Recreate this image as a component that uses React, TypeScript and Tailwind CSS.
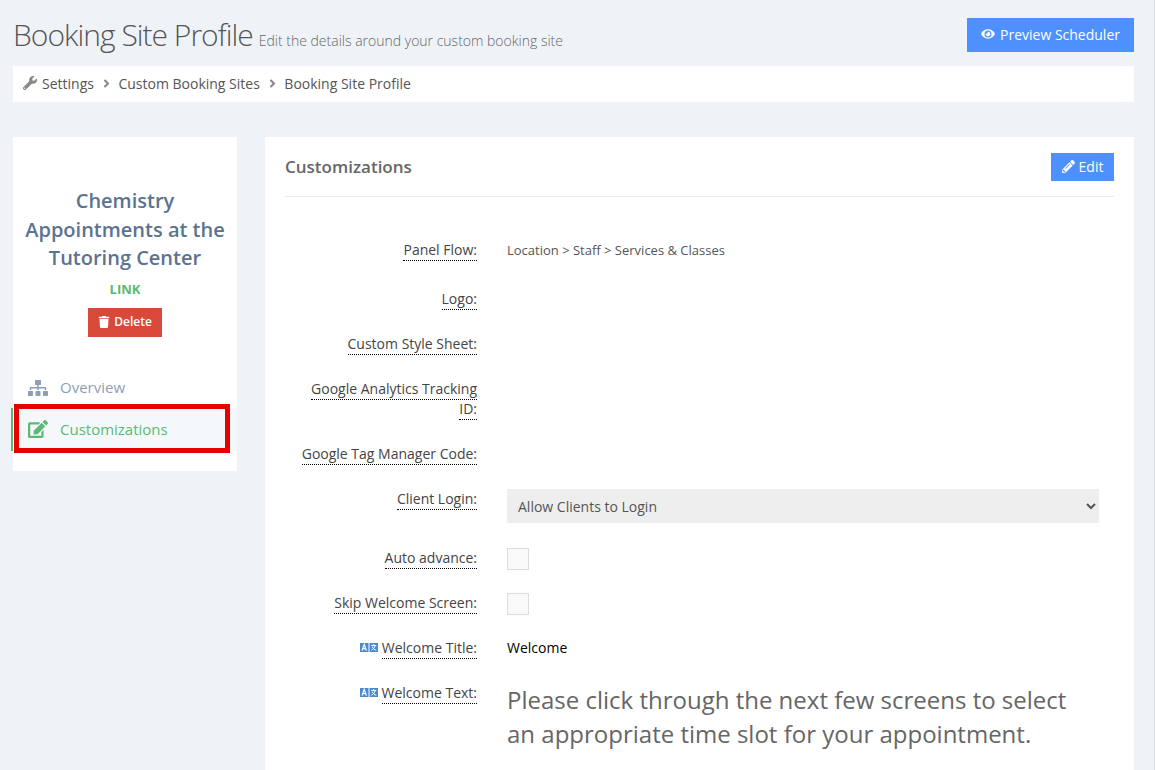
import { ReactNode } from "react";
import { FaAngleRight, FaEdit, FaEye, FaPencilAlt, FaSitemap, FaTrash, FaWrench } from "react-icons/fa";

// small "translate" badge in front of the welcome labels
const TranslateIcon = () => (
  <svg width="18" height="9" viewBox="0 0 18 9" className="mr-1 inline-block align-[1px]">
    <rect x="0" y="0" width="8.5" height="9" fill="#4a8bd0" />
    <rect x="9.5" y="0" width="8.5" height="9" fill="#4a8bd0" />
    <path d="M2 7.6 4.2 1.4 6.4 7.6M3 5.6H5.5" stroke="#fff" strokeWidth="1.2" fill="none" />
    <path d="M11.2 2.5H16.3M13.7 1.2V2.5M15.2 2.5C14.6 5 13 6.5 11.3 7.2M12.2 3.8C13 5.5 14.5 6.8 16.3 7.3" stroke="#fff" strokeWidth="1" fill="none" />
  </svg>
);

interface IRow {
  label: ReactNode;
  heightClass: string;
  children?: ReactNode;
}

const Row = ({ label, heightClass, children }: IRow) => (
  <div className={`flex ${heightClass}`}>
    <div className="w-[192px] shrink-0 pl-[15px] text-right text-[14px] leading-[20px] text-[#444]">{label}</div>
    <div className="ml-[30px] flex-1">{children}</div>
  </div>
);

const Dotted = ({ children }: { children: ReactNode }) => (
  <span className="border-b border-dotted border-black pb-px">{children}</span>
);

const Crumb = () => <FaAngleRight className="mx-[5.75px] text-[13px] text-[#888]" />;

const CheckBox = () => <div className="h-[22px] w-[22px] border border-[#ddd] bg-[#f9f9f9]" />;

const App = () => {
  return (
    <div
      className="h-[770px] w-[1155px] overflow-hidden border-r border-[#d8dbe0] bg-[#eff3f8] pl-[13px] pr-[20px] text-[#444]"
      style={{ fontFamily: '"Open Sans", sans-serif' }}
    >
      <div className="flex h-[66px] items-start justify-between">
        <div className="mt-[14px] flex items-baseline">
          <h1 className="text-[30px] leading-[41px] font-light tracking-[-1px] text-[#555]">Booking Site Profile</h1>
          <span className="ml-[6px] text-[14px] font-light text-[#666]">Edit the details around your custom booking site</span>
        </div>
        <button className="mt-[18px] flex h-[34px] w-[167px] items-center justify-center gap-[5px] bg-[#4d90fe] pb-[2px] text-[14px] font-medium text-white">
          <FaEye className="text-[14px]" />
          Preview Scheduler
        </button>
      </div>

      <div className="flex h-[36px] items-center bg-white pb-[2px] pl-[10px] text-[14px] text-[#555]">
        <FaWrench className="mr-[5px] text-[14px] text-[#888]" />
        <span>Settings</span>
        <Crumb />
        <span>Custom Booking Sites</span>
        <Crumb />
        <span>Booking Site Profile</span>
      </div>

      <div className="mt-[35px] flex items-start gap-[28px]">
        <aside className="relative h-[334px] w-[224px] shrink-0 bg-white">
          <div className="px-[5px] pt-[50px] text-center">
            <h2 className="text-[20px] leading-[28.5px] font-semibold text-[#5b7391]">
              Chemistry
              <br />
              Appointments at the
              <br />
              Tutoring Center
            </h2>
            <div className="mt-[7px] text-[13px] leading-[18px] font-bold text-[#5cb874]">LINK</div>
            <button className="mx-auto mt-[10px] flex h-[29px] w-[74px] items-center justify-center gap-[4px] bg-[#d9493a] text-[12px] font-semibold text-white">
              <FaTrash className="text-[12px]" />
              Delete
            </button>
          </div>
          <nav className="mt-[29px]">
            <div className="flex h-[42px] items-center pt-[2px] pl-[15px] text-[15px] text-[#8d9eb5]">
              <FaSitemap className="mr-[12px] w-[20px] text-[20px]" />
              Overview
            </div>
            <div className="relative -ml-[2px] flex h-[43px] items-center border-l-2 border-[#5cb874] bg-[#f5f8fb] pl-[15px] text-[15px] text-[#5cb874]">
              <FaEdit className="mr-[12px] w-[20px] text-[18px]" />
              Customizations
              <div className="absolute top-[-4px] left-[1px] h-[49px] w-[216px] border-[5px] border-[#e60000]" />
            </div>
          </nav>
        </aside>

        <main className="h-[700px] flex-1 bg-white px-[20px]">
          <div className="flex h-[60px] items-center justify-between border-b border-[#e7ecf1]">
            <h3 className="text-[17px] font-semibold text-[#666]">Customizations</h3>
            <button className="flex h-[28px] w-[63px] items-center justify-center gap-[4px] bg-[#4d90fe] text-[14px] text-white">
              <FaPencilAlt className="text-[13px]" />
              Edit
            </button>
          </div>

          <div className="pt-[43px]">
            <Row heightClass="h-[49px]" label={<Dotted>Panel Flow:</Dotted>}>
              <div className="text-[13px] leading-[20px] text-[#555]">Location &gt; Staff &gt; Services &amp; Classes</div>
            </Row>
            <Row heightClass="h-[45px]" label={<Dotted>Logo:</Dotted>} />
            <Row heightClass="h-[45px]" label={<Dotted>Custom Style Sheet:</Dotted>} />
            <Row heightClass="h-[65px]" label={<Dotted>Google Analytics Tracking ID:</Dotted>} />
            <Row heightClass="h-[45px]" label={<Dotted>Google Tag Manager Code:</Dotted>} />
            <Row heightClass="h-[59px]" label={<Dotted>Client Login:</Dotted>}>
              <select
                defaultValue="allow"
                className="h-[34px] w-[592px] bg-[#eee] pl-[7px] text-[14px] text-[#555]"
              >
                <option value="allow">Allow Clients to Login</option>
              </select>
            </Row>
            <Row heightClass="h-[45px]" label={<Dotted>Auto advance:</Dotted>}>
              <CheckBox />
            </Row>
            <Row heightClass="h-[45px]" label={<Dotted>Skip Welcome Screen:</Dotted>}>
              <CheckBox />
            </Row>
            <Row
              heightClass="h-[45px]"
              label={
                <>
                  <TranslateIcon />
                  <Dotted>Welcome Title:</Dotted>
                </>
              }
            >
              <div className="text-[14px] leading-[20px] text-black">Welcome</div>
            </Row>
            <Row
              heightClass="h-[90px]"
              label={
                <>
                  <TranslateIcon />
                  <Dotted>Welcome Text:</Dotted>
                </>
              }
            >
              <p className="text-[24px] leading-[34px] text-[#666]">
                Please click through the next few screens to select
                <br />
                an appropriate time slot for your appointment.
              </p>
            </Row>
          </div>
        </main>
      </div>
    </div>
  );
};

export default App;
